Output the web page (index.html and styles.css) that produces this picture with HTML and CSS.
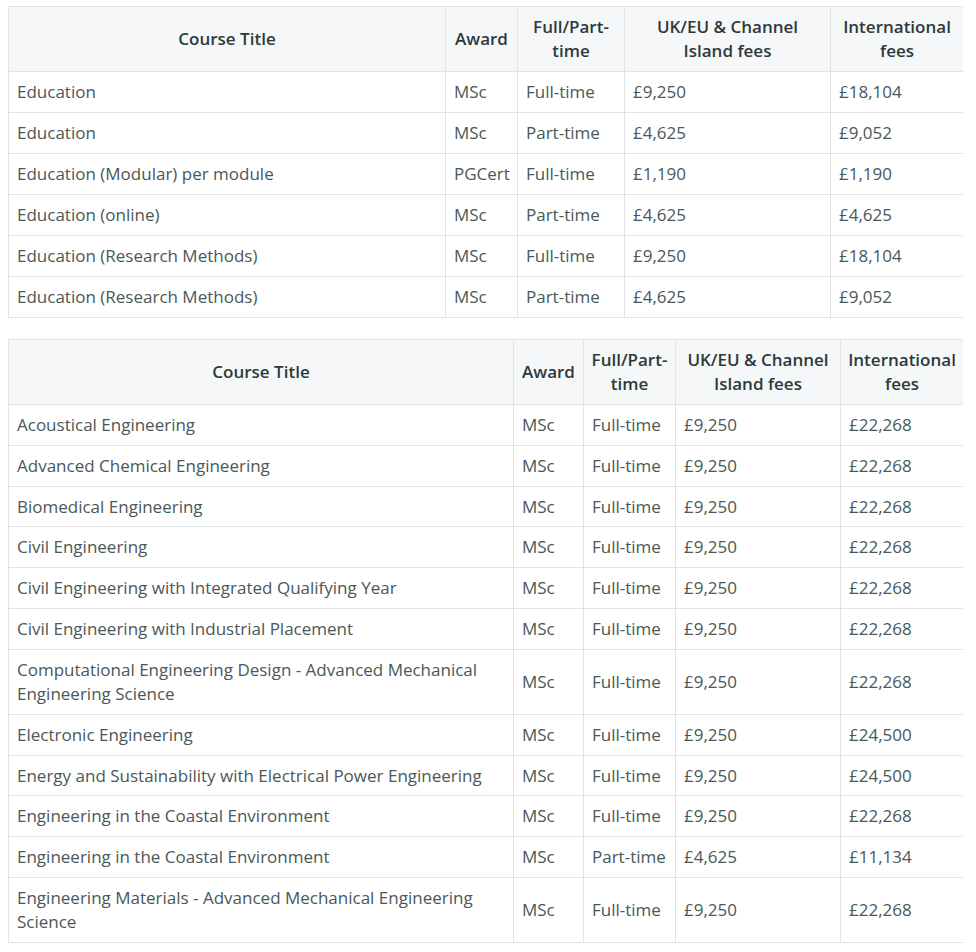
FILE: index.html
```html
<!DOCTYPE html>
<html lang="en">
<head>
<meta charset="utf-8">
<title>Course fees</title>
<link rel="stylesheet" href="styles.css">
</head>
<body>
<table class="fees fees-a">
  <colgroup>
    <col class="a1"><col class="a2"><col class="a3"><col class="a4"><col class="a5">
  </colgroup>
  <thead>
    <tr><th>Course Title</th><th>Award</th><th>Full/Part-time</th><th>UK/EU &amp; Channel Island fees</th><th>International fees</th></tr>
  </thead>
  <tbody>
    <tr><td>Education</td><td>MSc</td><td>Full-time</td><td>£9,250</td><td>£18,104</td></tr>
    <tr><td>Education</td><td>MSc</td><td>Part-time</td><td>£4,625</td><td>£9,052</td></tr>
    <tr><td>Education (Modular) per module</td><td>PGCert</td><td>Full-time</td><td>£1,190</td><td>£1,190</td></tr>
    <tr><td>Education (online)</td><td>MSc</td><td>Part-time</td><td>£4,625</td><td>£4,625</td></tr>
    <tr><td>Education (Research Methods)</td><td>MSc</td><td>Full-time</td><td>£9,250</td><td>£18,104</td></tr>
    <tr><td>Education (Research Methods)</td><td>MSc</td><td>Part-time</td><td>£4,625</td><td>£9,052</td></tr>
  </tbody>
</table>

<table class="fees fees-b">
  <colgroup>
    <col class="b1"><col class="b2"><col class="b3"><col class="b4"><col class="b5">
  </colgroup>
  <thead>
    <tr><th>Course Title</th><th>Award</th><th>Full/Part-time</th><th>UK/EU &amp; Channel Island fees</th><th>International fees</th></tr>
  </thead>
  <tbody>
    <tr><td>Acoustical Engineering</td><td>MSc</td><td>Full-time</td><td>£9,250</td><td>£22,268</td></tr>
    <tr><td>Advanced Chemical Engineering</td><td>MSc</td><td>Full-time</td><td>£9,250</td><td>£22,268</td></tr>
    <tr><td>Biomedical Engineering</td><td>MSc</td><td>Full-time</td><td>£9,250</td><td>£22,268</td></tr>
    <tr><td>Civil Engineering</td><td>MSc</td><td>Full-time</td><td>£9,250</td><td>£22,268</td></tr>
    <tr><td>Civil Engineering with Integrated Qualifying Year</td><td>MSc</td><td>Full-time</td><td>£9,250</td><td>£22,268</td></tr>
    <tr><td>Civil Engineering with Industrial Placement</td><td>MSc</td><td>Full-time</td><td>£9,250</td><td>£22,268</td></tr>
    <tr><td>Computational Engineering Design - Advanced Mechanical Engineering Science</td><td>MSc</td><td>Full-time</td><td>£9,250</td><td>£22,268</td></tr>
    <tr><td>Electronic Engineering</td><td>MSc</td><td>Full-time</td><td>£9,250</td><td>£24,500</td></tr>
    <tr><td>Energy and Sustainability with Electrical Power Engineering</td><td>MSc</td><td>Full-time</td><td>£9,250</td><td>£24,500</td></tr>
    <tr><td>Engineering in the Coastal Environment</td><td>MSc</td><td>Full-time</td><td>£9,250</td><td>£22,268</td></tr>
    <tr><td>Engineering in the Coastal Environment</td><td>MSc</td><td>Part-time</td><td>£4,625</td><td>£11,134</td></tr>
    <tr><td>Engineering Materials - Advanced Mechanical Engineering Science</td><td>MSc</td><td>Full-time</td><td>£9,250</td><td>£22,268</td></tr>
  </tbody>
</table>
</body>
</html>
```

FILE: styles.css
```css
html, body {
  background: #ffffff;
}
body {
  margin: 6px 13px 0 8px;
  font-family: "Open Sans", "Noto Sans", sans-serif;
  font-size: 17px;
  line-height: 24.2px;
  color: #4a5858;
}
.fees {
  width: 955px;
  border-collapse: collapse;
  table-layout: fixed;
  margin-bottom: 21px;
}
.fees th,
.fees td {
  border: 1px solid #e1e3e5;
  padding: 8px 8px 7.6px;
  vertical-align: middle;
}
.fees th {
  background: #f6f7f8;
  color: #2c3a3b;
  font-weight: 600;
  text-align: center;
  padding: 8px 6px 7.6px;
}
.fees td {
  text-align: left;
}
.fees-a th,
.fees-a td {
  line-height: 24px;
  padding-bottom: 8px;
}
.a1 { width: 437px; }
.a2 { width: 72px; }
.a3 { width: 107px; }
.a4 { width: 206px; }
.a5 { width: 133px; }
.b1 { width: 505px; }
.b2 { width: 70px; }
.b3 { width: 92px; }
.b4 { width: 165px; }
.b5 { width: 123px; }
```
